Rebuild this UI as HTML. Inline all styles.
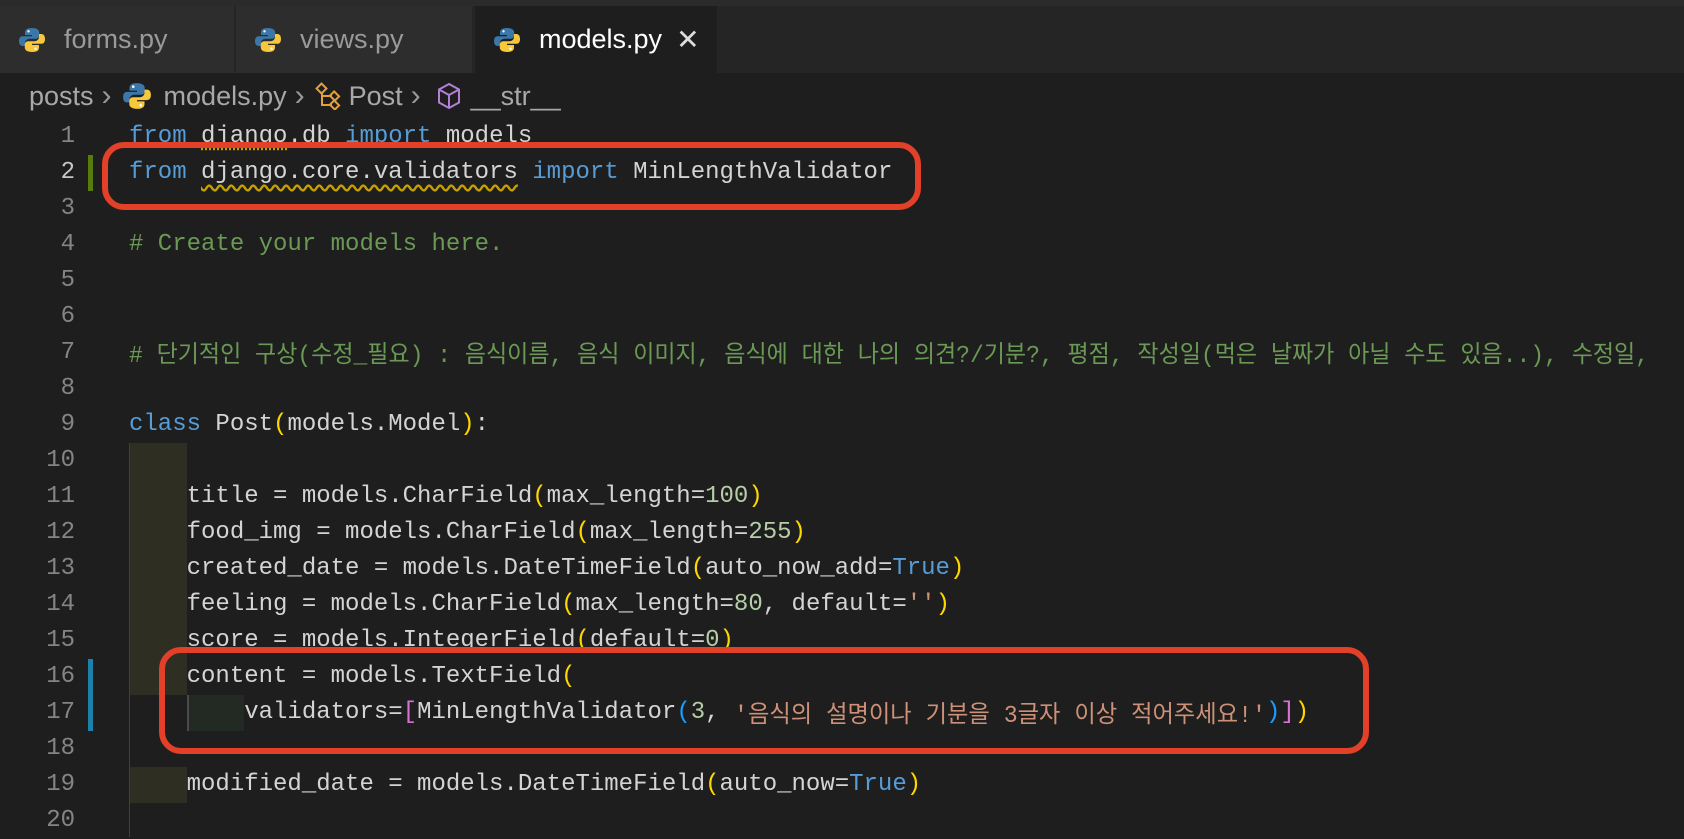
<!DOCTYPE html>
<html><head><meta charset="utf-8"><style>
body{margin:0;width:1684px;height:834px;background:#1e1e1e;overflow:hidden;position:relative;font-family:"Liberation Mono","Noto Sans CJK KR",monospace}
.tabbar{position:absolute;left:0;top:0;width:1684px;height:73px;background:#252526;border-top:6px solid #2b2b2b;box-sizing:border-box}
.tab{position:absolute;top:6px;height:67px;background:#2d2d2d;font-family:"Liberation Sans",sans-serif;font-size:27px;color:#9a9a9a;display:flex;align-items:center}
.tab.active{background:#1e1e1e;color:#fff}
.py{display:inline-block;width:28px;height:28px;margin:0 18px 0 18px}
.bc{position:absolute;left:29px;top:78px;font-family:"Liberation Sans",sans-serif;font-size:27px;color:#a8a8a8;display:flex;align-items:center;height:36px;white-space:pre}
.ch{color:#999;font-size:30px;margin:0 10px 0 8px}
.ln{position:absolute;left:0;width:75px;text-align:right;color:#858585;font-size:24px;line-height:36px}
.code{position:absolute;left:129px;font-size:24px;line-height:36px;color:#d4d4d4;white-space:pre}
.k{color:#569cd6}.c{color:#6a9955}.s{color:#ce9178}.n{color:#b5cea8}.y{color:#ffd700}.p{color:#da70d6}.b{color:#179fff}
.sq{text-decoration:underline wavy #c8a000;text-underline-offset:6px}
.box{position:absolute;border:6px solid #e3402a;border-radius:22px;box-sizing:border-box}
.ind{position:absolute;background:#2e2e22}
</style></head><body>
<div class="tabbar"></div>
<svg width="0" height="0" style="position:absolute"><defs>
<symbol id="py" viewBox="0 0 28 28"><path d="M13.6 2c-5 0-6.6 2-6.6 4.5V9h7v1.2H4.6C2.3 10.2 1 12 1 15c0 3.2 1.5 5 3.6 5H7v-3c0-2.3 2-4.2 4.4-4.2h6.4c2 0 3.4-1.5 3.4-3.5V6.5C21.2 4 19 2 13.6 2z" fill="#3b77a8"/><path d="M14.4 26c5 0 6.6-2 6.6-4.5V19h-7v-1.2h9.4c2.3 0 3.6-1.8 3.6-4.8 0-3.2-1.5-5-3.6-5H21v3c0 2.3-2 4.2-4.4 4.2h-6.4c-2 0-3.4 1.5-3.4 3.5v2.8C6.8 24 9 26 14.4 26z" fill="#f7c83c"/><circle cx="10.5" cy="5.3" r="1.2" fill="#fff"/><circle cx="17.5" cy="22.7" r="1.2" fill="#fff"/></symbol></defs></svg>
<div class="tab" style="left:0;width:234px"><svg class="py"><use href="#py"/></svg>forms.py</div>
<div class="tab" style="left:236px;width:236px"><svg class="py"><use href="#py"/></svg>views.py</div>
<div class="tab active" style="left:475px;width:242px"><svg class="py"><use href="#py"/></svg>models.py<span style="margin-left:14px;font-size:28px;color:#ddd">✕</span></div>
<div class="bc">posts<span class="ch">›</span><svg class="py" style="margin:0 12px 0 0;width:30px;height:30px"><use href="#py"/></svg>models.py<span class="ch">›</span><svg width="28" height="28" viewBox="0 0 28 28" style="margin:0 6px 0 0"><g fill="none" stroke="#e59f3a" stroke-width="2"><rect x="3" y="3" width="7" height="7" transform="rotate(45 6.5 6.5)"/><rect x="16" y="11" width="7" height="6" transform="rotate(45 19.5 14)"/><rect x="16" y="20" width="7" height="6" transform="rotate(45 19.5 23)"/><path d="M7 10v13h10M7 14h10"/></g></svg>Post<span class="ch">›</span><svg width="28" height="28" viewBox="0 0 28 28" style="margin:0 8px 0 4px"><g fill="none" stroke="#b180d7" stroke-width="2"><path d="M14 2l10 5.5v13L14 26 4 20.5v-13z"/><path d="M4 7.5L14 13l10-5.5M14 13v13"/></g></svg>__str__</div>

<div class="ind" style="left:129px;top:443px;width:58px;height:252px"></div>
<div class="ind" style="left:129px;top:767px;width:58px;height:36px"></div>
<div class="ind" style="left:187px;top:695px;width:57px;height:36px;background:#232a24"></div>
<div style="position:absolute;left:129px;top:443px;width:1px;height:394px;background:#404040"></div>
<div style="position:absolute;left:187px;top:695px;width:2px;height:36px;background:#4a4a4a"></div>
<div style="position:absolute;left:88px;top:155px;width:5px;height:36px;background:#587c0c"></div>
<div style="position:absolute;left:88px;top:659px;width:5px;height:72px;background:#1b81a8"></div>

<div class="ln" style="top:119px">1</div><div class="ln" style="top:155px;color:#c6c6c6">2</div><div class="ln" style="top:191px">3</div><div class="ln" style="top:227px">4</div><div class="ln" style="top:263px">5</div><div class="ln" style="top:299px">6</div><div class="ln" style="top:335px">7</div><div class="ln" style="top:371px">8</div><div class="ln" style="top:407px">9</div><div class="ln" style="top:443px">10</div><div class="ln" style="top:479px">11</div><div class="ln" style="top:515px">12</div><div class="ln" style="top:551px">13</div><div class="ln" style="top:587px">14</div><div class="ln" style="top:623px">15</div><div class="ln" style="top:659px">16</div><div class="ln" style="top:695px">17</div><div class="ln" style="top:731px">18</div><div class="ln" style="top:767px">19</div><div class="ln" style="top:803px">20</div>

<div class="code" style="top:119px"><span class="k">from</span> <span class="sq" style="text-decoration-style:dotted">django</span>.db <span class="k">import</span> models</div>
<div class="code" style="top:155px"><span class="k">from</span> <span class="sq">django.core.validators</span> <span class="k">import</span> MinLengthValidator</div>
<div class="code c" style="top:227px"># Create your models here.</div>
<div class="code" style="top:335px"><svg width="1530" height="36" style="vertical-align:top"><text x="0" y="27" textLength="1520" lengthAdjust="spacingAndGlyphs" fill="#6a9955" font-size="24" font-family="Liberation Mono, Noto Sans CJK KR, monospace"># 단기적인 구상(수정_필요) : 음식이름, 음식 이미지, 음식에 대한 나의 의견?/기분?, 평점, 작성일(먹은 날짜가 아닐 수도 있음..), 수정일,</text></svg></div>
<div class="code" style="top:407px"><span class="k">class</span> Post<span class="y">(</span>models.Model<span class="y">)</span>:</div>
<div class="code" style="top:479px">    title = models.CharField<span class="y">(</span>max_length=<span class="n">100</span><span class="y">)</span></div>
<div class="code" style="top:515px">    food_img = models.CharField<span class="y">(</span>max_length=<span class="n">255</span><span class="y">)</span></div>
<div class="code" style="top:551px">    created_date = models.DateTimeField<span class="y">(</span>auto_now_add=<span class="k">True</span><span class="y">)</span></div>
<div class="code" style="top:587px">    feeling = models.CharField<span class="y">(</span>max_length=<span class="n">80</span>, default=<span class="s">''</span><span class="y">)</span></div>
<div class="code" style="top:623px">    score = models.IntegerField<span class="y">(</span>default=<span class="n">0</span><span class="y">)</span></div>
<div class="code" style="top:659px">    content = models.TextField<span class="y">(</span></div>
<div class="code" style="top:695px">        validators=<span class="p">[</span>MinLengthValidator<span class="b">(</span><span class="n">3</span>, <svg width="532" height="36" style="vertical-align:top"><text x="0" y="27" textLength="532" lengthAdjust="spacingAndGlyphs" fill="#ce9178" font-size="24" font-family="Liberation Mono, Noto Sans CJK KR, monospace">'음식의 설명이나 기분을 3글자 이상 적어주세요!'</text></svg><span class="b">)</span><span class="p">]</span><span class="y">)</span></div>
<div class="code" style="top:767px">    modified_date = models.DateTimeField<span class="y">(</span>auto_now=<span class="k">True</span><span class="y">)</span></div>

<div class="box" style="left:102px;top:142px;width:819px;height:68px"></div>
<div class="box" style="left:159px;top:647px;width:1210px;height:107px"></div>
</body></html>
